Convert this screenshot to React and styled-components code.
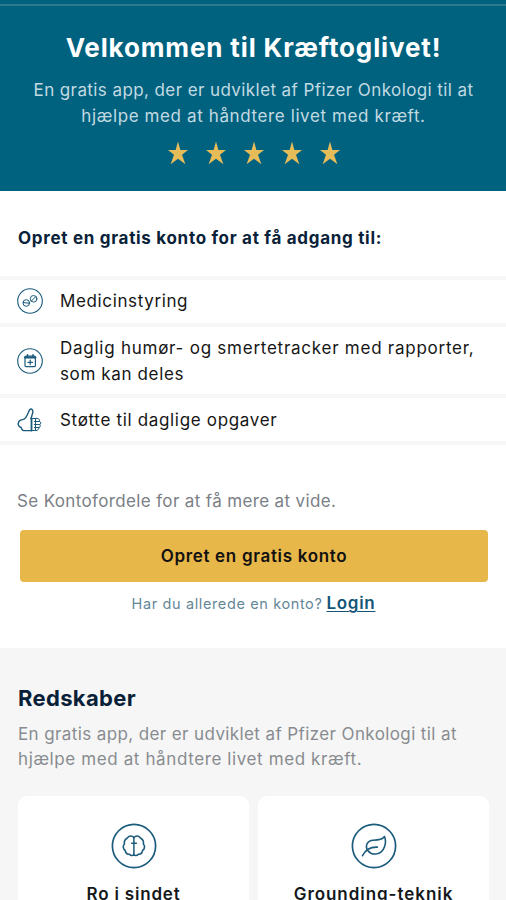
import React from "react";
import styled, { createGlobalStyle } from "styled-components";

const GlobalStyle = createGlobalStyle`
  * {
    box-sizing: border-box;
  }
  body {
    margin: 0;
    background: #fff;
    font-family: Inter, "Open Sans", sans-serif;
    overflow: hidden;
  }
`;

const Page = styled.main`
  width: 506px;
  height: 900px;
  overflow: hidden;
`;

const Line = styled.span`
  display: block;
  white-space: nowrap;
  letter-spacing: ${({ $track = 0 }) => $track}px;
`;

const Hero = styled.header`
  height: 191px;
  padding-top: 4px;
  display: flex;
  flex-direction: column;
  align-items: center;
  background: #00627f;
  color: #fff;
  text-align: center;
`;

const HeroRule = styled.div`
  align-self: stretch;
  height: 2px;
  background: #2c7a8e;
`;

const Title = styled.h1`
  margin: 26px 0 0 1px;
  font-size: 26px;
  line-height: 32px;
  font-weight: 700;
`;

const HeroText = styled.p`
  margin: 13px 0 0 1px;
  font-size: 17px;
  line-height: 26px;
  color: #c3dae2;
`;

const Stars = styled.div`
  display: flex;
  gap: 16px;
  margin: 12px 0 0 1px;
`;

const Benefits = styled.section`
  height: 457px;
`;

const BenefitsTitle = styled.h2`
  margin: 0;
  padding: 35px 18px 26px;
  font-size: 17px;
  line-height: 24px;
  font-weight: 700;
  color: #0a2239;
`;

const List = styled.ul`
  margin: 0;
  padding: 0;
  list-style: none;
  border-top: 4px solid #f7f7f7;
`;

const Item = styled.li`
  height: ${({ $height }) => $height}px;
  padding: 0 0 ${({ $lift = 0 }) => $lift}px 17px;
  display: flex;
  align-items: center;
  gap: 17px;
  border-bottom: 4px solid #f7f7f7;
  font-size: 17px;
  line-height: 26px;
  color: #161616;
`;

const More = styled.p`
  margin: 44px 17px 0;
  font-size: 17px;
  line-height: 24px;
  color: #7b8086;
`;

const CreateButton = styled.button`
  display: flex;
  align-items: center;
  justify-content: center;
  width: 468px;
  height: 52px;
  margin: 17px 0 0 20px;
  padding: 0;
  border: 0;
  border-radius: 4px;
  background: #e7b74a;
  font: 600 17px Inter, "Open Sans", sans-serif;
  color: #111;
`;

const LoginRow = styled.p`
  display: flex;
  justify-content: center;
  align-items: baseline;
  gap: 4px;
  margin: 9px 0 0 1px;
  font-size: 14.5px;
  line-height: 24px;
  color: #648797;
`;

const LoginLink = styled.a`
  font-size: 17px;
  font-weight: 600;
  color: #145576;
  text-decoration: underline;
  text-decoration-thickness: 1px;
  text-underline-offset: 2px;
`;

const Tools = styled.section`
  height: 252px;
  padding: 36px 17px 0 18px;
  background: #f6f6f6;
`;

const ToolsTitle = styled.h2`
  margin: 0;
  font-size: 22px;
  line-height: 28px;
  font-weight: 700;
  color: #0a1f38;
`;

const ToolsText = styled.p`
  margin: 10px 0 0;
  font-size: 17px;
  line-height: 25px;
  color: #888c90;
`;

const Cards = styled.div`
  display: grid;
  grid-template-columns: 1fr 1fr;
  gap: 9px;
  margin-top: 24px;
`;

const Card = styled.article`
  height: 150px;
  padding-top: 27px;
  display: flex;
  flex-direction: column;
  align-items: center;
  border-radius: 9px;
  background: #fff;
`;

const CardTitle = styled.h3`
  margin: 13px 0 0;
  font-size: 17px;
  line-height: 24px;
  font-weight: 600;
  color: #15181b;
`;

const Star = () => (
  <svg width="22" height="24" viewBox="0 0 22 24">
    <path
      d="M11 0.5 13.4 9H21L15 13.8 18.4 23.2 11 17.7 3.6 23.2 7 13.8 1 9H8.6Z"
      fill="#e6bc58"
    />
  </svg>
);

const iconProps = {
  fill: "none",
  stroke: "#1b5b7c",
  strokeLinecap: "round",
  strokeLinejoin: "round",
};

const PillsIcon = () => (
  <svg width="26" height="28" viewBox="0 0 26 28" {...iconProps}>
    <circle cx="13" cy="14" r="12.3" strokeWidth="1.1" />
    <circle cx="9.3" cy="16" r="3.3" />
    <path d="M6.2 15.6 12.4 16.2" />
    <circle cx="16.6" cy="11.8" r="3.3" />
    <path d="M14.4 14 18.8 9.6" />
  </svg>
);

const CalendarIcon = () => (
  <svg width="26" height="28" viewBox="0 0 26 28" {...iconProps}>
    <circle cx="13" cy="14" r="12.3" strokeWidth="1.1" />
    <rect x="8" y="9.2" width="10.4" height="10.4" rx="1" strokeWidth="1.2" />
    <path d="M8 10.5h10.4" strokeWidth="2.2" />
    <path d="M10.5 7.8v2M16 7.8v2" strokeWidth="1.5" />
    <path d="M13.2 13v4.6M10.9 15.3h4.6" strokeWidth="1.2" />
  </svg>
);

const ThumbIcon = () => (
  <svg width="26" height="26" viewBox="0 0 26 26" {...iconProps}>
    <path
      d="M14.5 23.6H6.8C4.8 23.6 4.6 22 4.2 20.5 1.2 19.8.8 17.2 1.5 15.2 2 13.4 4 12.8 6.2 12.4 9 11.8 10.2 8.3 11.3 5.5 12 3.5 12.8 1.7 14.2 2 16.5 2.5 16 5.5 15 8.3L13.9 11.7"
      strokeWidth="1.4"
    />
    <path d="M14.5 11.5v12.1" strokeWidth="1.8" />
    <path
      d="M14.5 11.5H20c2 0 3 1.1 2.3 2.9 2 .6 2 2.6.4 3.1 1.1 1.2.5 2.7-.8 3 0 1.9-1 3-3 3h-4.4M17.3 14.5h5M17.3 17.5h5.2M17.3 20.5H22M18.5 12v11"
      strokeWidth="1"
    />
  </svg>
);

const BrainIcon = () => (
  <svg width="46" height="46" viewBox="0 0 46 46" {...iconProps}>
    <circle cx="23" cy="23" r="21.6" strokeWidth="1.7" />
    <path
      d="M22.9 14.6C21 12.2 17.6 12.6 16.4 15 14 16.2 13 18.6 13.4 21 11.6 23 12 26 14.2 27.4 14.6 30 16.4 31.4 18.4 31.2 19.8 33 22.2 33 22.9 31.2 23.6 33 26 33 27.4 31.2 29.4 31.4 31.2 30 31.6 27.4 33.8 26 34.2 23 32.4 21 32.8 18.6 31.8 16.2 29.4 15 28.2 12.6 24.8 12.2 22.9 14.6Z"
      strokeWidth="1.6"
    />
    <path d="M22.9 14.6v16.6M20.6 20.2h4.8" strokeWidth="1.5" />
  </svg>
);

const LeafIcon = () => (
  <svg width="46" height="46" viewBox="0 0 46 46" {...iconProps}>
    <circle cx="23" cy="23" r="21.6" strokeWidth="1.7" />
    <path
      d="M17.2 28C13.6 23.4 15.8 17.4 22.3 17.2 27.5 17.1 31.5 16.7 33.5 13.5 36 19.7 33.2 29.4 26.2 30.8 22.2 31.5 19.2 30.6 17.2 28Z"
      strokeWidth="1.6"
    />
    <path d="M11.5 32.7C14.3 27 19.5 23.8 26.3 24.1" strokeWidth="1.6" />
  </svg>
);

const benefits = [
  { icon: PillsIcon, height: 47, lift: 1, lines: [["Medicinstyring", 0.63]] },
  {
    icon: CalendarIcon,
    height: 71,
    lines: [
      ["Daglig humør- og smertetracker med rapporter,", 0.75],
      ["som kan deles", 0.63],
    ],
  },
  {
    icon: ThumbIcon,
    height: 47,
    lines: [["Støtte til daglige opgaver", 0.67]],
  },
];

const tools = [
  { icon: BrainIcon, title: "Ro i sindet", track: 0.8 },
  { icon: LeafIcon, title: "Grounding-teknik", track: 0.95 },
];

const App = () => {
  return (
    <Page>
      <GlobalStyle />
      <Hero>
        <HeroRule />
        <Title>
          <Line $track={0.86}>Velkommen til Kræftoglivet!</Line>
        </Title>
        <HeroText>
          <Line $track={0.41}>
            En gratis app, der er udviklet af Pfizer Onkologi til at
          </Line>
          <Line $track={0.61}>hjælpe med at håndtere livet med kræft.</Line>
        </HeroText>
        <Stars>
          {[1, 2, 3, 4, 5].map((n) => (
            <Star key={n} />
          ))}
        </Stars>
      </Hero>
      <Benefits>
        <BenefitsTitle>
          <Line $track={0.7}>Opret en gratis konto for at få adgang til:</Line>
        </BenefitsTitle>
        <List>
          {benefits.map(({ icon: Icon, height, lift, lines }) => (
            <Item key={lines[0][0]} $height={height} $lift={lift}>
              <Icon />
              <div>
                {lines.map(([text, track]) => (
                  <Line key={text} $track={track}>
                    {text}
                  </Line>
                ))}
              </div>
            </Item>
          ))}
        </List>
        <More>
          <Line $track={0.36}>Se Kontofordele for at få mere at vide.</Line>
        </More>
        <CreateButton>
          <Line $track={0.68}>Opret en gratis konto</Line>
        </CreateButton>
        <LoginRow>
          <Line $track={0.62}>Har du allerede en konto?</Line>
          <LoginLink href="#">
            <Line $track={0.7}>Login</Line>
          </LoginLink>
        </LoginRow>
      </Benefits>
      <Tools>
        <ToolsTitle>
          <Line $track={0.35}>Redskaber</Line>
        </ToolsTitle>
        <ToolsText>
          <Line $track={0.39}>
            En gratis app, der er udviklet af Pfizer Onkologi til at
          </Line>
          <Line $track={0.61}>hjælpe med at håndtere livet med kræft.</Line>
        </ToolsText>
        <Cards>
          {tools.map(({ icon: Icon, title, track }) => (
            <Card key={title}>
              <Icon />
              <CardTitle>
                <Line $track={track}>{title}</Line>
              </CardTitle>
            </Card>
          ))}
        </Cards>
      </Tools>
    </Page>
  );
};

export default App;
